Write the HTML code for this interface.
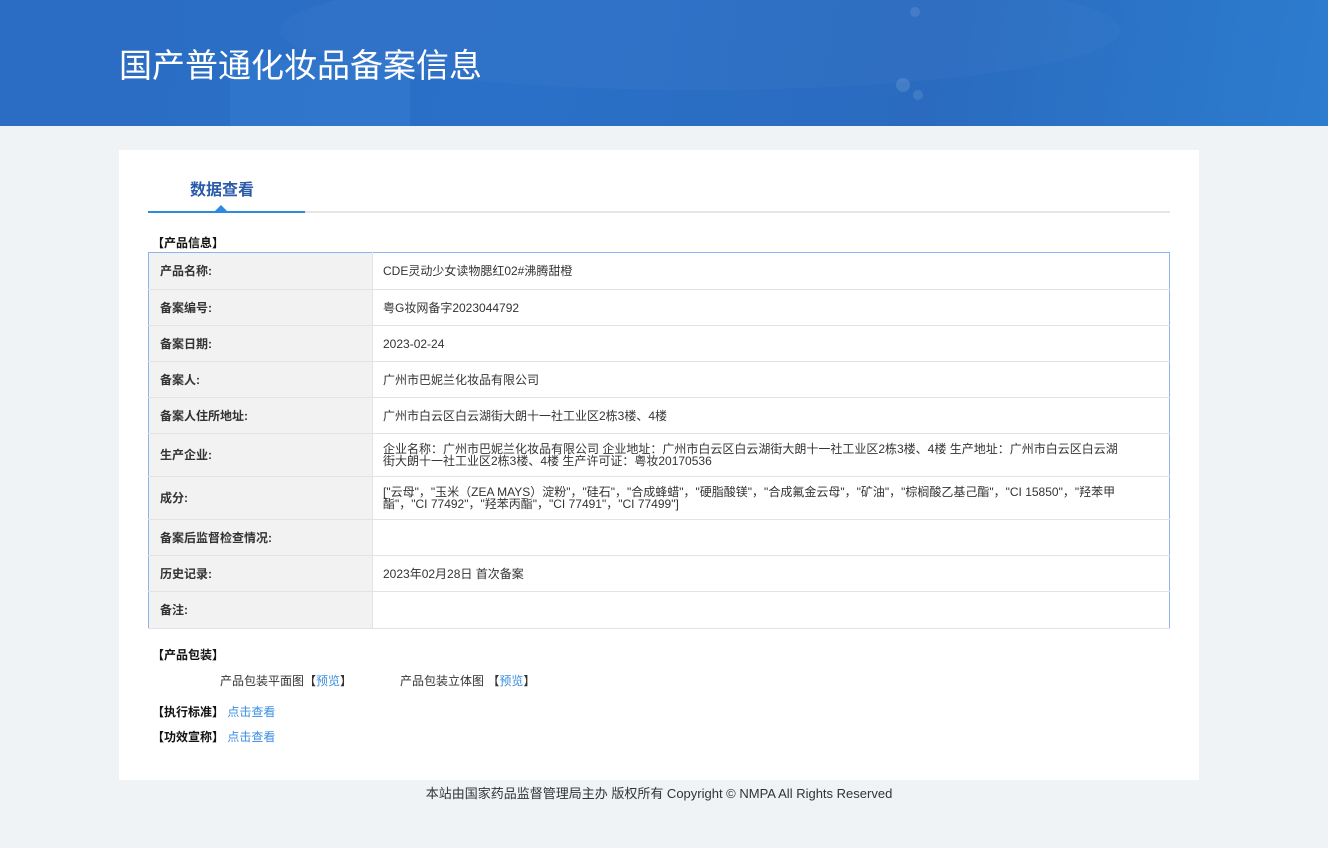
<!DOCTYPE html>
<html><head><meta charset="utf-8"><style>
*{margin:0;padding:0;box-sizing:border-box}
body{width:1328px;height:848px;background:#eff3f6;font-family:"Liberation Sans","Noto Sans CJK SC",sans-serif;font-size:12px;color:#333;position:relative;overflow:hidden}
.hd{position:absolute;left:0;top:0;width:1328px;height:126px;background:linear-gradient(100deg,#2b6cc4 0%,#2a70c8 40%,#2a6bbf 70%,#2c7ccf 100%);overflow:hidden}
.hd h1{position:absolute;left:119px;top:39px;font-size:33px;font-weight:normal;color:#fff}
.card{position:absolute;left:119px;top:150px;width:1080px;height:630px;background:#fff}
.tab{position:absolute;left:71px;top:26px;font-size:16px;font-weight:bold;color:#2a5aa8}
.line{position:absolute;left:29px;top:61px;width:1022px;height:2px;background:#e5e5e5}
.line b{position:absolute;left:0;top:0;width:157px;height:2px;background:#2e8ae0}
.tri{position:absolute;left:96px;top:55px;width:0;height:0;border-left:6px solid transparent;border-right:6px solid transparent;border-bottom:6px solid #2e8ae0}
.sec{position:absolute;font-weight:bold;color:#111;font-size:12px}
table{position:absolute;left:29px;top:102px;width:1022px;border-collapse:collapse;border:1px solid #8fb3ea}
td{border-bottom:1px solid #e3e3e3;font-size:12px;line-height:12px;vertical-align:middle}
td.l{width:224px;background:#f2f2f2;font-weight:bold;color:#333;padding-left:11px;border-right:1px solid #e3e3e3}
td.v{padding-left:10px;padding-right:44px;color:#333}
a{color:#3a8ee0;text-decoration:none}
.ft{position:absolute;top:783px;left:0;width:1318px;text-align:center;font-size:13px;color:#333}
</style></head><body>
<div class="hd">
<svg width="1328" height="126" style="position:absolute;left:0;top:0">
<ellipse cx="700" cy="30" rx="420" ry="60" fill="#fff" opacity="0.025"/>
<rect x="230" y="60" width="180" height="70" fill="#5aa0f0" opacity="0.15"/>
<circle cx="903" cy="85" r="7" fill="#fff" opacity="0.12"/>
<circle cx="918" cy="95" r="5" fill="#fff" opacity="0.1"/>
<circle cx="915" cy="12" r="5" fill="#fff" opacity="0.1"/>
</svg>
<h1>国产普通化妆品备案信息</h1></div>
<div class="card">
<div class="tab">数据查看</div>
<div class="line"><b></b></div><div class="tri"></div>
<div class="sec" style="left:33px;top:84px">【产品信息】</div>
<table>
<tr style="height:37px"><td class="l">产品名称:</td><td class="v">CDE灵动少女读物腮红02#沸腾甜橙</td></tr>
<tr style="height:36px"><td class="l">备案编号:</td><td class="v">粤G妆网备字2023044792</td></tr>
<tr style="height:36px"><td class="l">备案日期:</td><td class="v">2023-02-24</td></tr>
<tr style="height:36px"><td class="l">备案人:</td><td class="v">广州市巴妮兰化妆品有限公司</td></tr>
<tr style="height:36px"><td class="l">备案人住所地址:</td><td class="v">广州市白云区白云湖街大朗十一社工业区2栋3楼、4楼</td></tr>
<tr style="height:43px"><td class="l">生产企业:</td><td class="v">企业名称：广州市巴妮兰化妆品有限公司 企业地址：广州市白云区白云湖街大朗十一社工业区2栋3楼、4楼 生产地址：广州市白云区白云湖街大朗十一社工业区2栋3楼、4楼 生产许可证：粤妆20170536</td></tr>
<tr style="height:43px"><td class="l">成分:</td><td class="v">["云母"，"玉米（ZEA MAYS）淀粉"，"硅石"，"合成蜂蜡"，"硬脂酸镁"，"合成氟金云母"，"矿油"，"棕榈酸乙基己酯"，"CI 15850"，"羟苯甲酯"，"CI 77492"，"羟苯丙酯"，"CI 77491"，"CI 77499"]</td></tr>
<tr style="height:36px"><td class="l">备案后监督检查情况:</td><td class="v"></td></tr>
<tr style="height:36px"><td class="l">历史记录:</td><td class="v">2023年02月28日 首次备案</td></tr>
<tr style="height:37px"><td class="l">备注:</td><td class="v"></td></tr>
</table>
<div class="sec" style="left:33px;top:496px">【产品包装】</div>
<div style="position:absolute;left:101px;top:522px">产品包装平面图【<a>预览</a>】</div>
<div style="position:absolute;left:281px;top:522px">产品包装立体图 【<a>预览</a>】</div>
<div class="sec" style="left:33px;top:553px">【执行标准】 <a style="font-weight:normal">点击查看</a></div>
<div class="sec" style="left:33px;top:578px">【功效宣称】 <a style="font-weight:normal">点击查看</a></div>
</div>
<div class="ft">本站由国家药品监督管理局主办 版权所有 Copyright © NMPA All Rights Reserved</div>
</body></html>
